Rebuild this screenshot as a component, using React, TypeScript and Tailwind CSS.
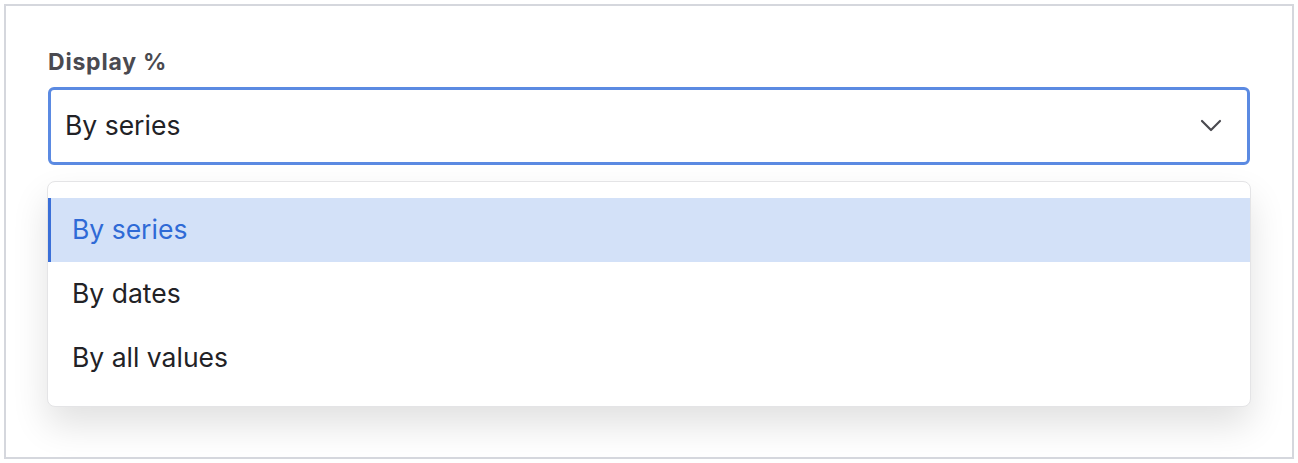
import React from "react"

const options = ["By series", "By dates", "By all values"]

export default function App() {
  const selected = "By series"
  return (
    <div className="h-[463px] w-[1298px] bg-white p-[4px] font-['Inter',sans-serif]">
      <div className="h-[455px] border-2 border-[#d5d7dd] px-[42px] pt-[42px]">
        <label className="block text-[23px] font-bold leading-[28px] tracking-[0.8px] text-[#4a4a50]">Display %</label>
        <div className="mt-[11px] flex h-[78px] items-center justify-between rounded-[6px] border-[3px] border-[#5b8ae2] pl-[14px] pr-[25px]">
          <span className="text-[26.5px] text-[#222226]">{selected}</span>
          <svg width="22" height="14" viewBox="0 0 22 14" fill="none">
            <path d="M2 2l9 9 9-9" stroke="#4a4a50" strokeWidth="2.2" strokeLinecap="round" strokeLinejoin="round" />
          </svg>
        </div>
        <div className="mt-[16px] ml-[-1px] mr-[-1px] rounded-[8px] border border-[#e4e4e6] bg-white py-[16px] shadow-[0_18px_36px_rgba(0,0,0,0.12)]">
          {options.map((o) => (
            <div
              key={o}
              className={
                o === selected
                  ? "flex h-[64px] items-center border-l-[3px] border-[#3a6fd8] bg-[#d3e1f8] pl-[21px] text-[26.5px] text-[#2f6ad6]"
                  : "flex h-[64px] items-center pl-[24px] text-[26.5px] text-[#222226]"
              }
            >
              {o}
            </div>
          ))}
        </div>
      </div>
    </div>
  )
}
